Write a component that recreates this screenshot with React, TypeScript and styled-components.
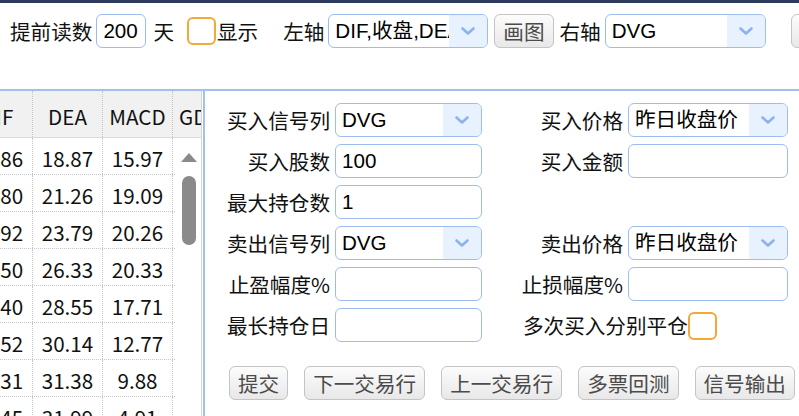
import React from "react";
import styled, { createGlobalStyle } from "styled-components";

const CJK = `"Noto Sans CJK SC", "Noto Sans", sans-serif`;
const LAT = `"Liberation Sans", "Noto Sans CJK SC", sans-serif`;
const FS = "20.6px";

const Global = createGlobalStyle`
  html, body { margin: 0; padding: 0; background: #fff; }
  body { font-family: ${CJK}; color: #111; }
  * { box-sizing: border-box; }
`;

const Page = styled.div`
  width: 799px;
  height: 416px;
  overflow: hidden;
  background: #fff;
  display: flex;
  flex-direction: column;
`;

const Toolbar = styled.div`
  height: 89px;
  flex: none;
  border-top: 3px solid #2d3b5f;
  padding: 11px 0 0 10px;
  display: flex;
  align-items: flex-start;
  white-space: nowrap;
  overflow: hidden;
`;

const ToolLabel = styled.span<{ $ml?: number }>`
  flex: none;
  height: 34px;
  line-height: 34px;
  margin-left: ${(p) => p.$ml ?? 0}px;
  font-family: ${CJK};
  font-size: ${FS};
  color: #111;
`;

const TextBox = styled.input<{ $w: number; $ml?: number }>`
  flex: none;
  width: ${(p) => p.$w}px;
  height: 34px;
  margin: 0 0 0 ${(p) => p.$ml ?? 0}px;
  padding: 0 6px;
  border: 1px solid #9dbcef;
  border-radius: 6px;
  background: #fff;
  font-family: ${LAT};
  font-size: ${FS};
  color: #000;
  outline: none;
`;

const SelectBox = styled.div<{ $w: number; $ml?: number }>`
  flex: none;
  width: ${(p) => p.$w}px;
  height: 34px;
  margin-left: ${(p) => p.$ml ?? 0}px;
  border: 1px solid #9dbcef;
  border-radius: 6px;
  background: #fff;
  display: flex;
  overflow: hidden;
`;

const SelectValue = styled.span`
  flex: 1;
  min-width: 0;
  padding: 0 6px;
  line-height: 32px;
  overflow: hidden;
  white-space: nowrap;
  font-family: ${LAT};
  font-size: ${FS};
  color: #000;
`;

const SelectArrow = styled.span`
  flex: none;
  width: 38px;
  background: #e8f1fe;
  display: flex;
  align-items: center;
  justify-content: center;
`;

const Button = styled.button<{ $ml?: number }>`
  flex: none;
  height: 34px;
  margin: 0 0 0 ${(p) => p.$ml ?? 0}px;
  padding: 0 8px;
  border: 1px solid #c4c4c4;
  border-radius: 6px;
  background: linear-gradient(#fcfcfc, #e8e8e8);
  font-family: ${CJK};
  font-size: ${FS};
  line-height: 1;
  color: #4b4b4b;
  white-space: nowrap;
`;

const Check = styled.span<{ $ml?: number }>`
  flex: none;
  display: inline-block;
  width: 29px;
  height: 28px;
  margin-top: 3px;
  margin-left: ${(p) => p.$ml ?? 0}px;
  border: 2px solid #f3a838;
  border-radius: 6px;
  background: #fff;
`;

const Main = styled.div`
  flex: 1;
  display: flex;
  border-top: 2px solid #a3bfee;
  min-height: 0;
`;

const LeftPanel = styled.div`
  flex: none;
  width: 202px;
  border-right: 1px solid #d6d6d6;
  position: relative;
  overflow: hidden;
`;

const Table = styled.div`
  margin-left: -37px;
  width: max-content;
`;

const HeaderRow = styled.div`
  display: flex;
  height: 47px;
  background: #f1f1f1;
  border-bottom: 1px solid #dadada;
`;

const BodyRow = styled.div`
  display: flex;
  height: 37px;
  border-bottom: 1px dotted #c6c6c6;
`;

const Cell = styled.div<{ $w?: number; $left?: boolean }>`
  flex: none;
  width: ${(p) => p.$w ?? 70}px;
  border-right: 1px dotted #c6c6c6;
  display: flex;
  align-items: center;
  justify-content: ${(p) => (p.$left ? "flex-start" : "center")};
  padding: ${(p) => (p.$left ? "0 0 0 6px" : "0")};
  padding-top: 3px;
  font-family: ${CJK};
  font-size: ${FS};
  color: #111;
  white-space: nowrap;
`;

const Scrollbar = styled.div`
  position: absolute;
  top: 47px;
  right: 0;
  bottom: 0;
  width: 26px;
  background: #fff;
  display: flex;
  flex-direction: column;
  padding-left: 6px;
`;

const ScrollUp = styled.svg`
  margin-top: 15px;
  display: block;
`;

const ScrollThumb = styled.div`
  margin-top: 14px;
  margin-left: 1px;
  width: 14px;
  height: 69px;
  border-radius: 7px;
  background: #8a8a8a;
`;

const Splitter = styled.div`
  flex: none;
  width: 2px;
  margin-left: 1px;
  background: #a3bfee;
`;

const RightPanel = styled.div`
  flex: 1;
  padding: 12px 0 0 24px;
  overflow: hidden;
`;

const FormGrid = styled.div`
  display: grid;
  grid-template-columns: 106px 147px 146px 160px;
  grid-auto-rows: 34px;
  row-gap: 7px;
`;

const FieldLabel = styled.div`
  display: flex;
  align-items: center;
  justify-content: flex-end;
  padding-right: 5px;
  white-space: nowrap;
  font-family: ${CJK};
  font-size: ${FS};
  color: #111;
`;

const CheckField = styled.div`
  grid-column: 3 / 5;
  display: flex;
  align-items: center;
  padding-left: 41px;
  white-space: nowrap;
  font-family: ${CJK};
  font-size: ${FS};
  color: #111;
`;

const Empty = styled.div`
  grid-column: span 2;
`;

const ButtonRow = styled.div`
  margin-top: 24px;
  display: flex;
  gap: 16px;
`;

const Chevron = () => (
  <svg width="14" height="8" viewBox="0 0 14 8">
    <path d="M1.5 1.5 L7 6.5 L12.5 1.5" fill="none" stroke="#8db3ee" strokeWidth="2.6" strokeLinecap="round" strokeLinejoin="round" />
  </svg>
);

const Select = ({ w, ml, value }: { w: number; ml?: number; value: string }) => (
  <SelectBox $w={w} $ml={ml}>
    <SelectValue>{value}</SelectValue>
    <SelectArrow>
      <Chevron />
    </SelectArrow>
  </SelectBox>
);

const rows: [string, string, string][] = [
  ["26.86", "18.87", "15.97"],
  ["30.80", "21.26", "19.09"],
  ["33.92", "23.79", "20.26"],
  ["36.50", "26.33", "20.33"],
  ["37.40", "28.55", "17.71"],
  ["36.52", "30.14", "12.77"],
  ["36.31", "31.38", "9.88"],
  ["34.45", "31.99", "4.91"],
];

export default function App() {
  return (
    <Page>
      <Global />
      <Toolbar>
        <ToolLabel>提前读数</ToolLabel>
        <TextBox $w={50} $ml={4} defaultValue="200" />
        <ToolLabel $ml={7}>天</ToolLabel>
        <Check $ml={13} />
        <ToolLabel $ml={1}>显示</ToolLabel>
        <ToolLabel $ml={25}>左轴</ToolLabel>
        <Select w={160} ml={4} value="DIF,收盘,DEA,MACD" />
        <Button $ml={6}>画图</Button>
        <ToolLabel $ml={6}>右轴</ToolLabel>
        <Select w={161} ml={4} value="DVG" />
        <Button $ml={25}>画图</Button>
      </Toolbar>
      <Main>
        <LeftPanel>
          <Table>
            <HeaderRow>
              <Cell>DIF</Cell>
              <Cell>DEA</Cell>
              <Cell>MACD</Cell>
              <Cell $w={120} $left>
                GDIF
              </Cell>
            </HeaderRow>
            {rows.map((r, i) => (
              <BodyRow key={i}>
                <Cell>{r[0]}</Cell>
                <Cell>{r[1]}</Cell>
                <Cell>{r[2]}</Cell>
                <Cell $w={120} $left />
              </BodyRow>
            ))}
          </Table>
          <Scrollbar>
            <ScrollUp width="16" height="9" viewBox="0 0 16 9">
              <polygon points="8,0 16,9 0,9" fill="#8a8a8a" />
            </ScrollUp>
            <ScrollThumb />
          </Scrollbar>
        </LeftPanel>
        <Splitter />
        <RightPanel>
          <FormGrid>
            <FieldLabel>买入信号列</FieldLabel>
            <Select w={147} value="DVG" />
            <FieldLabel>买入价格</FieldLabel>
            <Select w={160} value="昨日收盘价" />

            <FieldLabel>买入股数</FieldLabel>
            <TextBox $w={147} defaultValue="100" />
            <FieldLabel>买入金额</FieldLabel>
            <TextBox $w={160} defaultValue="" />

            <FieldLabel>最大持仓数</FieldLabel>
            <TextBox $w={147} defaultValue="1" />
            <Empty />

            <FieldLabel>卖出信号列</FieldLabel>
            <Select w={147} value="DVG" />
            <FieldLabel>卖出价格</FieldLabel>
            <Select w={160} value="昨日收盘价" />

            <FieldLabel>止盈幅度%</FieldLabel>
            <TextBox $w={147} defaultValue="" />
            <FieldLabel>止损幅度%</FieldLabel>
            <TextBox $w={160} defaultValue="" />

            <FieldLabel>最长持仓日</FieldLabel>
            <TextBox $w={147} defaultValue="" />
            <CheckField>
              多次买入分别平仓
              <Check style={{ marginTop: 2 }} />
            </CheckField>
          </FormGrid>
          <ButtonRow>
            <Button>提交</Button>
            <Button>下一交易行</Button>
            <Button>上一交易行</Button>
            <Button>多票回测</Button>
            <Button>信号输出</Button>
          </ButtonRow>
        </RightPanel>
      </Main>
    </Page>
  );
}
